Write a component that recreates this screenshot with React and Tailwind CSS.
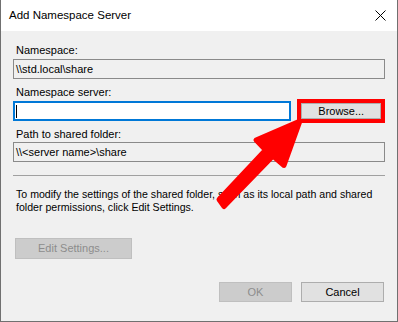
import React from 'react';

const font = { fontFamily: '"Liberation Sans", Arial, sans-serif' };

function Label({ children, className = '' }) {
  return <div className={`h-[14px] leading-[14px] text-[11px] text-black ${className}`}>{children}</div>;
}

function ReadOnlyBox({ value, className = '' }) {
  return (
    <div className={`h-[20px] border border-[#8a8a8a] bg-[#f0f0f0] pl-[2px] flex items-center text-[11px] text-black ${className}`}>
      {value}
    </div>
  );
}

function CloseIcon() {
  return (
    <svg width="11" height="11" viewBox="0 0 11 11">
      <line x1="0.5" y1="0.5" x2="10.5" y2="10.5" stroke="#000" strokeWidth="1" />
      <line x1="10.5" y1="0.5" x2="0.5" y2="10.5" stroke="#000" strokeWidth="1" />
    </svg>
  );
}

export default function App() {
  return (
    <div className="relative w-[398px] h-[322px] flex flex-col border-x border-b border-[#707070] bg-white overflow-hidden" style={font}>
      {/* title bar */}
      <div className="h-[31px] shrink-0 bg-white flex items-center justify-between pl-[8px] pr-[11px]">
        <span className="text-[11.5px] text-black">Add Namespace Server</span>
        <CloseIcon />
      </div>

      {/* body */}
      <div className="flex-1 bg-[#f0f0f0] px-[12px] pt-[12px] flex flex-col">
        <Label className="pl-[3px]">Namespace:</Label>
        <ReadOnlyBox className="mt-[2px]" value={'\\\\std.local\\share'} />

        <Label className="mt-[6px] pl-[3px]">Namespace server:</Label>
        <div className="flex items-center h-[24px] gap-[6px]">
          <div className="w-[280px] h-[20px] border-2 border-[#0078d7] bg-white flex items-center pl-[1px]">
            <div className="w-[1px] h-[13px] bg-black" />
          </div>
          <div className="w-[88px] h-[24px] border-4 border-[#ff0000] flex">
            <button className="flex-1 border border-[#adadad] bg-[#e1e1e1] text-[11px] text-black leading-none">
              Browse...
            </button>
          </div>
        </div>

        <Label className="mt-[4px] pl-[3px]">Path to shared folder:</Label>
        <ReadOnlyBox className="mt-[1px]" value={'\\\\<server name>\\share'} />

        <div className="mt-[13px] h-[1px] bg-[#a0a0a0]" />

        <p className="mt-[12px] pl-[3px] text-[10.6px] leading-[13px] text-black">
          To modify the settings of the shared folder, such as its local path and shared folder permissions, click Edit Settings.
        </p>

        <button
          disabled
          className="mt-[24px] ml-[2px] w-[117px] h-[21px] border border-[#bfbfbf] bg-[#cccccc] text-[11px] text-[#8c8c8c]"
        >
          Edit Settings...
        </button>

        <div className="mt-[23px] flex justify-end gap-[9px] mr-[1px]">
          <button disabled className="w-[73px] h-[20px] border border-[#bfbfbf] bg-[#cccccc] text-[11px] text-[#8c8c8c]">
            OK
          </button>
          <button className="w-[83px] h-[20px] border border-[#adadad] bg-[#e1e1e1] text-[11px] text-black">
            Cancel
          </button>
        </div>
      </div>

      {/* red annotation arrow */}
      <svg className="absolute inset-0 pointer-events-none" width="398" height="322" viewBox="0 0 398 322">
        <polygon
          points="218,199.5 264.5,150 255,140 299,121 283,165.5 272,156 223,206.5"
          fill="#ff0000"
          stroke="#ff0000"
          strokeWidth="5"
          strokeLinejoin="round"
        />
      </svg>
    </div>
  );
}
